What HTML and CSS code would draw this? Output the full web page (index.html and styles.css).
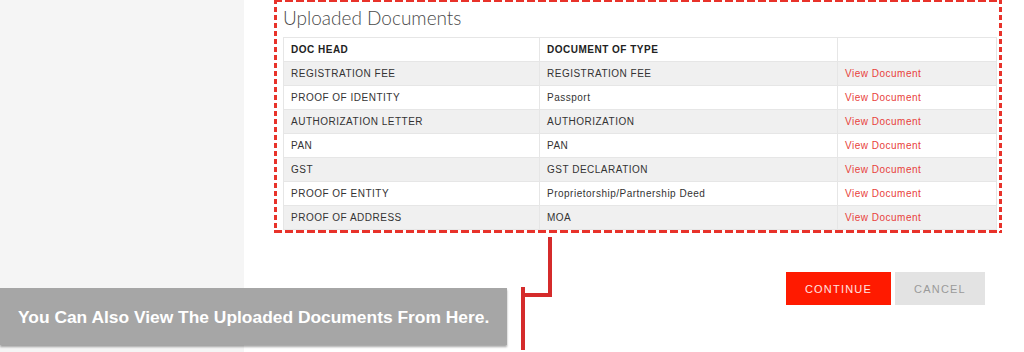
FILE: index.html
```html
<!DOCTYPE html>
<html lang="en">
<head>
    <meta charset="UTF-8">
    <meta name="viewport" content="width=device-width, initial-scale=1.0">
    <title>Uploaded Documents</title>
    <link rel="stylesheet" href="styles.css">
</head>
<body>
    <div class="sidebar"></div>
    <div class="main">
        <div class="docs-box">
            <h2 class="docs-title">Uploaded Documents</h2>
            <table class="docs-table">
                <thead>
                    <tr>
                        <th class="col-head">DOC HEAD</th>
                        <th class="col-type">DOCUMENT OF TYPE</th>
                        <th></th>
                    </tr>
                </thead>
                <tbody>
                    <tr>
                        <td>REGISTRATION FEE</td>
                        <td>REGISTRATION FEE</td>
                        <td><a href="#">View Document</a></td>
                    </tr>
                    <tr>
                        <td>PROOF OF IDENTITY</td>
                        <td>Passport</td>
                        <td><a href="#">View Document</a></td>
                    </tr>
                    <tr>
                        <td>AUTHORIZATION LETTER</td>
                        <td>AUTHORIZATION</td>
                        <td><a href="#">View Document</a></td>
                    </tr>
                    <tr>
                        <td>PAN</td>
                        <td>PAN</td>
                        <td><a href="#">View Document</a></td>
                    </tr>
                    <tr>
                        <td>GST</td>
                        <td>GST DECLARATION</td>
                        <td><a href="#">View Document</a></td>
                    </tr>
                    <tr>
                        <td>PROOF OF ENTITY</td>
                        <td>Proprietorship/Partnership Deed</td>
                        <td><a href="#">View Document</a></td>
                    </tr>
                    <tr>
                        <td>PROOF OF ADDRESS</td>
                        <td>MOA</td>
                        <td><a href="#">View Document</a></td>
                    </tr>
                </tbody>
            </table>
        </div>
        <div class="actions">
            <button class="btn btn-continue">CONTINUE</button>
            <button class="btn btn-cancel">CANCEL</button>
        </div>
    </div>

    <!-- callout -->
    <div class="callout">You Can Also View The Uploaded Documents From Here.</div>
    <svg class="callout-line" width="1024" height="352" viewBox="0 0 1024 352">
        <path d="M550 237 V295 H523 M523 287 V350" fill="none" stroke="#d52b2b" stroke-width="4"/>
    </svg>
</body>
</html>
```

FILE: styles.css
```css
body {
    margin: 0;
    width: 1024px;
    height: 352px;
    overflow: hidden;
    display: flex;
    background-color: #ffffff;
    font-family: 'Liberation Sans', Arial, sans-serif;
    color: #333;
    position: relative;
}
.sidebar {
    width: 244px;
    background-color: #f5f5f5;
}
.main {
    flex: 1;
}
/* marco punteado rojo */
.docs-box {
    margin: -1px 22px 0 30px;
    padding: 0 5px 3px 9px;
    background:
        repeating-linear-gradient(90deg, #e8322a 0 8px, transparent 8px 11px) top left / 100% 3px no-repeat,
        repeating-linear-gradient(90deg, #e8322a 0 8px, transparent 8px 11px) bottom left / 100% 3px no-repeat,
        repeating-linear-gradient(180deg, #e8322a 0 5px, transparent 5px 8px) top left / 3px 100% no-repeat,
        repeating-linear-gradient(180deg, #e8322a 0 5px, transparent 5px 8px) top right / 3px 100% no-repeat;
}
.docs-title {
    margin: 0;
    padding-top: 8px;
    height: 30px;
    font-family: Lato, sans-serif;
    font-weight: 300;
    font-size: 19px;
    line-height: 22px;
    color: #4a4a4a;
}
.docs-table {
    width: 714px;
    border-collapse: collapse;
    font-size: 10px;
    letter-spacing: 0.5px;
}
th, td {
    height: 23px;
    padding: 0 7px;
    text-align: left;
    border: 1px solid #e6e6e6;
}
th {
    font-weight: bold;
    color: #222;
}
.col-head {
    width: 241px;
}
.col-type {
    width: 283px;
}
tbody tr:nth-child(odd) {
    background-color: #f0f0f0;
}
td a {
    color: #e8413c;
    text-decoration: none;
}
.actions {
    display: flex;
    justify-content: flex-end;
    gap: 4px;
    margin: 39px 39px 0 0;
}
.btn {
    height: 33px;
    border: none;
    font-family: 'Liberation Sans', Arial, sans-serif;
    font-size: 11px;
    letter-spacing: 1.2px;
    cursor: pointer;
}
.btn-continue {
    width: 105px;
    background-color: #ff1a00;
    color: #ffe4e0;
}
.btn-cancel {
    width: 90px;
    background-color: #e3e3e3;
    color: #9a9a9a;
}
.callout {
    position: absolute;
    left: 0;
    top: 288px;
    width: 489px;
    height: 57px;
    padding-left: 18px;
    background-color: #a6a6a6;
    box-shadow: 0 2px 2px rgba(0, 0, 0, 0.35);
    color: #fff;
    font-weight: bold;
    font-size: 17.4px;
    line-height: 58px;
    white-space: nowrap;
}
.callout-line {
    position: absolute;
    left: 0;
    top: 0;
}
```
